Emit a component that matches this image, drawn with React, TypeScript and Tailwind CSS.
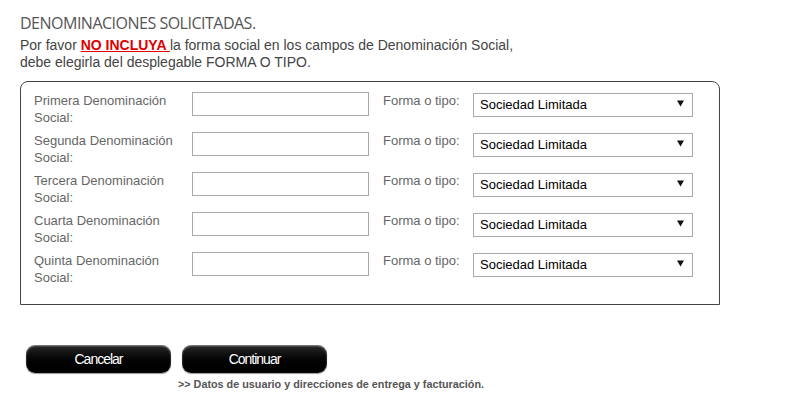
const FILAS = ["Primera", "Segunda", "Tercera", "Cuarta", "Quinta"];

const FORMAS = ["Sociedad Limitada", "Sociedad Anónima", "Sociedad Limitada Nueva Empresa"];

export default function App() {
  return (
    <main className="min-h-screen bg-white pl-[20px] pt-[13px] font-['Liberation_Sans',Arial,sans-serif]">
      <h1 className="font-['Open_Sans',sans-serif] text-[16px] font-medium leading-[20px] tracking-[-0.5px] text-[#555]">
        DENOMINACIONES SOLICITADAS.
      </h1>
      <p className="mt-[4px] text-[14px] leading-[17px] text-[#444]">
        Por favor{" "}
        <span className="font-bold text-[#e00000] underline">NO INCLUYA </span>
        la forma social en los campos de Denominación Social,
        <br />
        debe elegirla del desplegable FORMA O TIPO.
      </p>

      <div className="mt-[10px] w-[700px] rounded-t-[8px] border border-[#444] pl-[13px] pt-[10px] pb-[12px]">
        {FILAS.map((f) => (
          <div key={f} className="flex h-[40px] items-start">
            <label className="w-[158px] text-[13px] leading-[17px] text-[#666]">
              {f} Denominación
              <br />
              Social:
            </label>
            <input
              type="text"
              className="h-[24px] w-[177px] border border-[#aaa] bg-white px-1 text-[13px] outline-none"
            />
            <span className="ml-[14px] w-[90px] text-[13px] leading-[17px] text-[#666]">Forma o tipo:</span>
            <div className="relative h-[24px] w-[220px]">
              <select
                defaultValue={FORMAS[0]}
                className="h-full w-full appearance-none border border-[#aaa] bg-white pl-[6px] text-[13px] text-black outline-none"
              >
                {FORMAS.map((o) => (
                  <option key={o}>{o}</option>
                ))}
              </select>
              <svg
                className="pointer-events-none absolute right-[9px] top-[8px]"
                width="7"
                height="7"
                viewBox="0 0 7 7"
              >
                <path d="M0 0.5h7L3.5 6.5z" fill="#111" />
              </svg>
            </div>
          </div>
        ))}
      </div>

      <div className="mt-[40px] ml-[6px] flex gap-[11px]">
        <BotonNegro texto="Cancelar" />
        <BotonNegro texto="Continuar" />
      </div>
      <p className="ml-[158px] mt-[4px] text-[10.8px] font-bold leading-[14px] text-[#555]">
        &gt;&gt; Datos de usuario y direcciones de entrega y facturación.
      </p>
    </main>
  );
}

function BotonNegro({ texto }: { texto: string }) {
  return (
    <button
      type="button"
      className="h-[28px] w-[145px] rounded-[9px] bg-gradient-to-b from-[#2a2a2a] via-[#050505] to-black text-[14px] tracking-[-1px] text-white shadow-[inset_0_1px_2px_rgba(255,255,255,0.5),0_1px_1px_rgba(0,0,0,0.4)]"
    >
      {texto}
    </button>
  );
}
